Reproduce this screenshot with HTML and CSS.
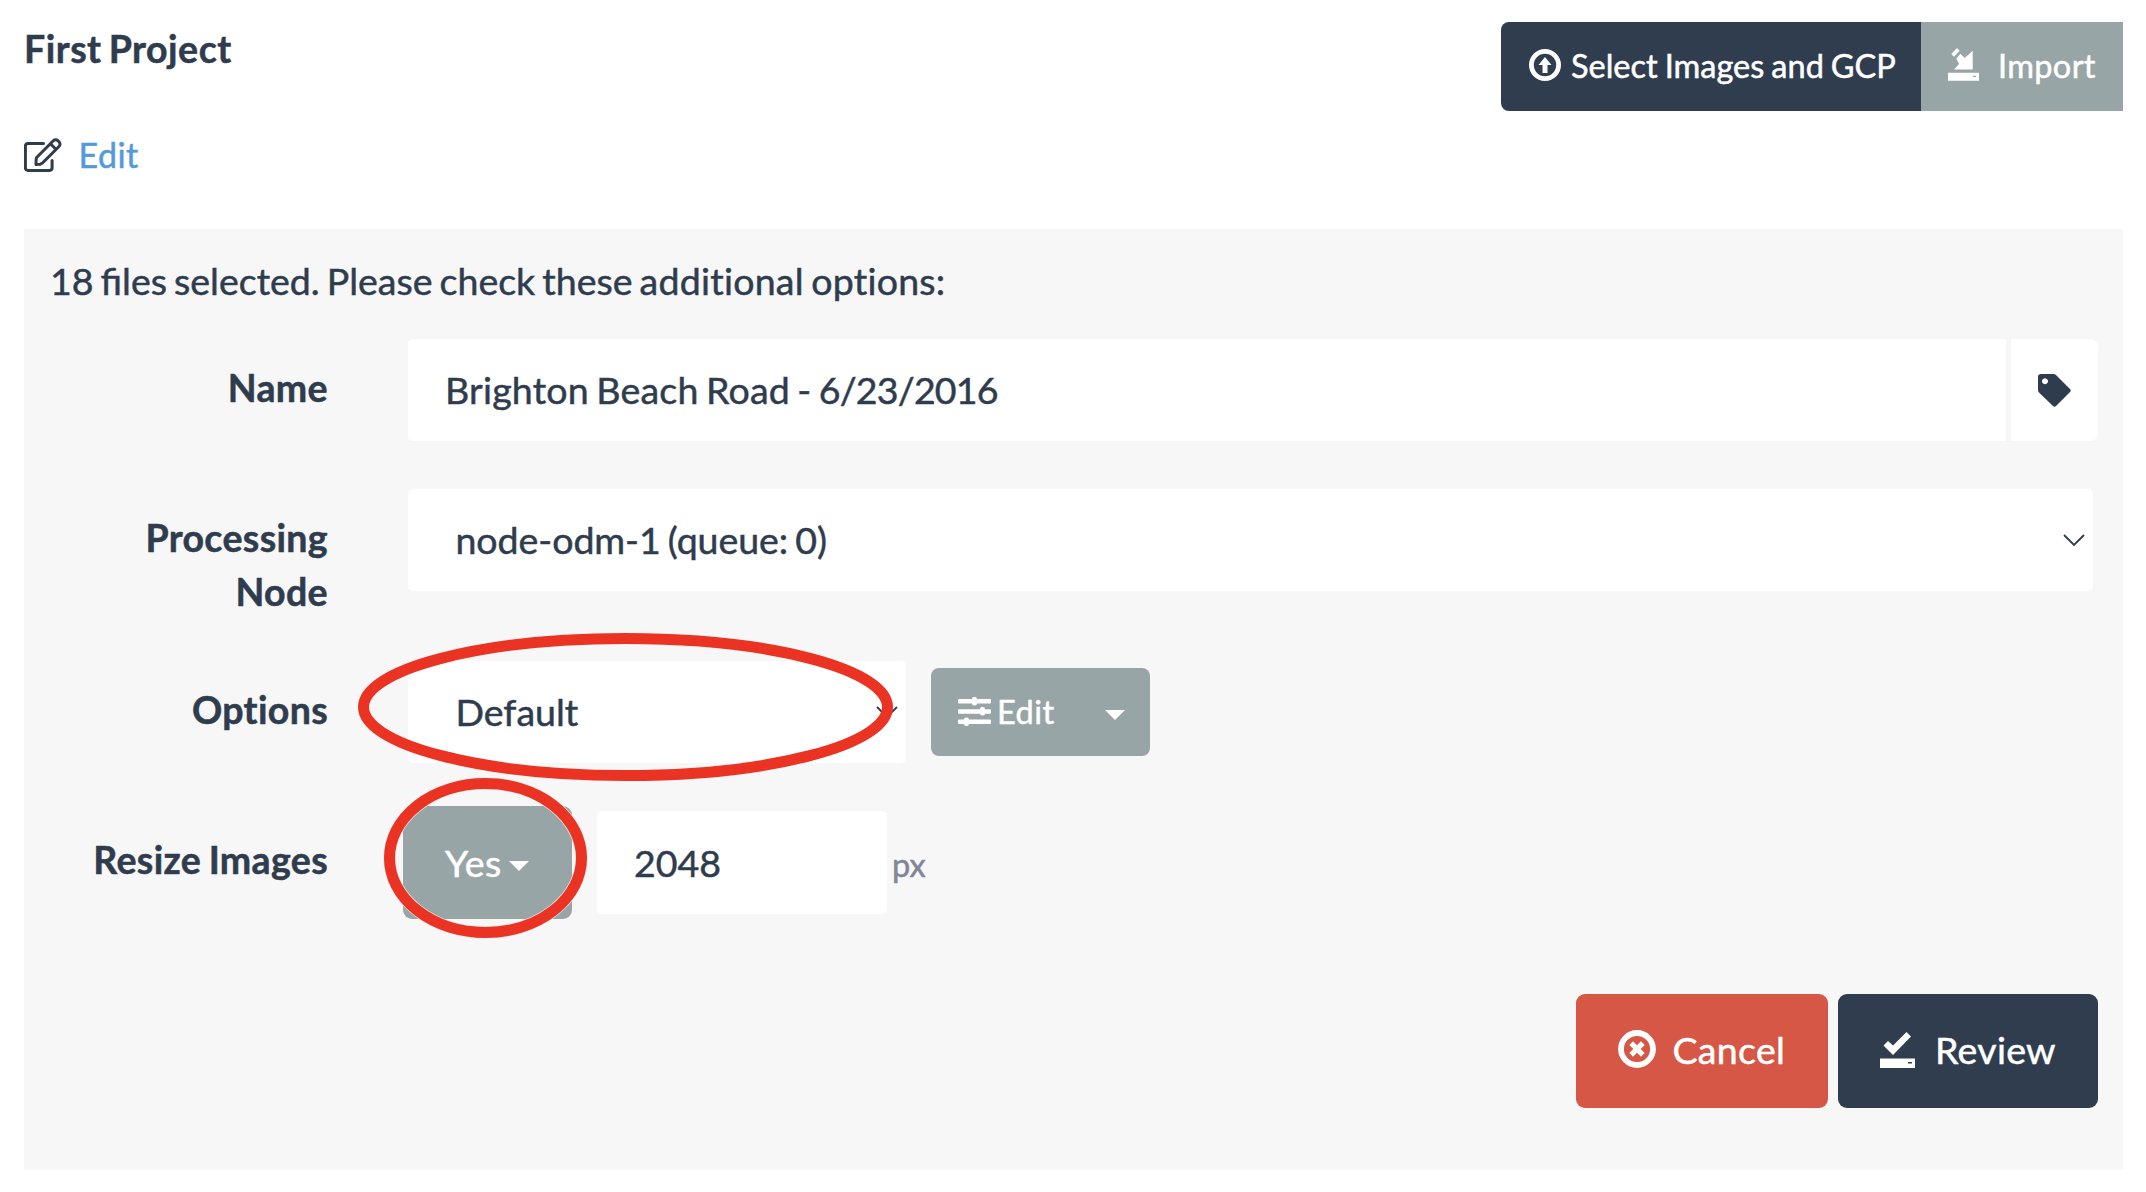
FILE: index.html
```html
<!DOCTYPE html>
<html lang="en">
<head>
<meta charset="utf-8">
<title>First Project</title>
<link rel="stylesheet" href="styles.css">
</head>
<body>
<header class="project-header">
  <div class="project-info">
    <h1 class="project-title">First Project</h1>
    <div class="project-actions">
      <svg class="icon-edit" viewBox="0 0 38 34" fill="none" stroke="currentColor" stroke-width="3" stroke-linejoin="round" stroke-linecap="round"><path d="M19.500 5.400H4a2.600 2.600 0 0 0-2.600 2.600V30a2.600 2.600 0 0 0 2.600 2.400H25.500a2.600 2.600 0 0 0 2.600-2.600V22.500"/><path d="M12.600 19.500 29.300 2.800a3.300 3.300 0 0 1 4.700 0l1 1a3.300 3.300 0 0 1 0 4.700L18.500 25l-2.500 1.300-4 .3.100-4.800zM26.500 5.800l5.400 5.400"/></svg>
      <a class="edit-link">Edit</a>
    </div>
  </div>
  <div class="button-group">
    <button class="btn btn-primary btn-select"><svg class="icon-upload" viewBox="0 0 32 32"><circle cx="16" cy="16" r="13.600" fill="none" stroke="currentColor" stroke-width="4.800"/><path fill="currentColor" d="M16 8l6.500 8h-4v8h-5v-8h-4z"/></svg>Select Images and GCP</button><button class="btn btn-secondary btn-import"><svg class="icon-import" viewBox="0 0 31 33" fill="currentColor"><path d="M3.300 6L9 0l2.700 2.700L6 8.700zM12.300 5.700l4.400 4.300L24.700 2.700v18.800H6l5-5.500-2.700-5.500z"/><path fill-rule="evenodd" d="M0 24.700h31v8H0zm25 3v1.300h3v-1.300z"/></svg>Import</button>
  </div>
</header>
<main class="task-panel">
  <p class="intro">18 files selected. Please check these <span class="intro-end">additional options:</span></p>
  <div class="form-row row-name">
    <label class="label">Name</label>
    <div class="name-group">
      <div class="field field-name">Brighton Beach Road -&nbsp;<span class="date">6/23/2016</span></div>
      <button class="tag-button"><svg class="icon-tag" viewBox="0 0 33 33"><path fill="currentColor" fill-rule="evenodd" d="M3 0H15.500Q17 0 18 1L32 15Q33.500 16.500 32 18L18 32Q16.500 33.500 15 32L1 18.500Q0 17.500 0 16V3Q0 0 3 0zM7 4.300a3 3 0 1 0 .01 0z"/></svg></button>
    </div>
  </div>
  <div class="form-row row-node">
    <label class="label">Processing Node</label>
    <div class="field select select-node">node-odm-1 (queue: 0)<svg class="chevron" viewBox="0 0 22 13"><path d="M1 1l10 10L21 1"/></svg></div>
  </div>
  <div class="form-row row-options">
    <label class="label">Options</label>
    <div class="field select select-options">Default<svg class="chevron" viewBox="0 0 22 13"><path d="M1 1l10 10L21 1"/></svg></div>
    <button class="btn btn-secondary btn-edit"><svg class="icon-sliders" viewBox="0 0 33 29" fill="currentColor"><rect y="2" width="33" height="4.500" rx="1"/><rect x="14" width="5" height="8.500" rx="2"/><rect y="12.200" width="33" height="4.500" rx="1"/><rect x="22" y="10" width="5" height="8.500" rx="2"/><rect y="22.400" width="33" height="4.500" rx="1"/><rect x="6" y="20.400" width="5" height="8.500" rx="2"/></svg>Edit<span class="caret"></span></button>
  </div>
  <div class="form-row row-resize">
    <label class="label">Resize Images</label>
    <button class="btn btn-secondary btn-yes">Yes<span class="caret"></span></button>
    <div class="field field-size">2048</div>
    <span class="unit">px</span>
  </div>
  <div class="form-actions">
    <button class="btn btn-danger btn-large"><svg class="icon-cancel" viewBox="0 0 38 38" fill="none" stroke="currentColor"><circle cx="19" cy="19" r="16" stroke-width="5.800"/><path d="M13.200 13.200l11.600 11.600m0-11.600l-11.600 11.600" stroke-width="5.200"/></svg>Cancel</button>
    <button class="btn btn-primary btn-large btn-review"><svg class="icon-review" viewBox="0 0 35 36" fill="currentColor"><path d="M3.500 13.500L8 9l5 4.500L26.500 0 31 4.500 13 23z"/><path fill-rule="evenodd" d="M0 26.500h35V36H0zm28 3.500v1.600h4V30z"/></svg>Review</button>
  </div>
</main>
<svg class="annotations" viewBox="0 0 2146 1192">
  <ellipse cx="625.500" cy="707" rx="262" ry="68.500"/>
  <ellipse class="halo" cx="485.500" cy="858" rx="96" ry="74.500"/>
  <ellipse cx="485.500" cy="858" rx="96" ry="74.500"/>
</svg>
</body>
</html>
```
FILE: styles.css
```css
* { box-sizing: border-box; }

body {
  margin: 0;
  width: 2146px;
  height: 1192px;
  padding: 22px 23px 0 24px;
  position: relative;
  overflow: hidden;
  background: #fff;
  color: #2f3c4e;
  font-family: Lato, sans-serif;
  font-size: 37.5px;
  line-height: 53.5px;
  -webkit-text-stroke: 0.5px;
}

svg { display: block; flex: none; }

.project-header {
  display: flex;
  justify-content: space-between;
  align-items: flex-start;
  height: 207px;
}

.project-title {
  margin: 0;
  font-size: 37.5px;
  font-weight: 700;
  letter-spacing: 0.5px;
  word-spacing: -2.5px;
}

.project-actions {
  display: flex;
  align-items: center;
  margin-top: 54px;
  font-size: 34px;
  line-height: 50px;
}

.icon-edit { width: 38px; height: 34px; margin-right: 16.5px; }
.edit-link { color: #5499db; letter-spacing: 0.5px; }

.button-group { display: flex; }

.btn {
  display: flex;
  align-items: center;
  border: 0;
  padding: 0 0 2px;
  color: #fff;
  border-radius: 8px;
  font: 32.5px/48px Lato, sans-serif;
  white-space: nowrap;
}

.btn-primary { background: #303d4f; }
.btn-secondary { background: #98a5a6; }
.btn-danger { background: #d65745; }

.btn-select {
  width: 420px;
  height: 89px;
  padding-left: 28px;
  border-radius: 8px 0 0 8px;
  word-spacing: -1.3px;
}

.btn-import {
  width: 202px;
  height: 89px;
  padding-left: 27px;
  border-radius: 0;
  letter-spacing: 0.35px;
}

.icon-upload { width: 32px; height: 32px; margin: -2px 10px 0 0; }
.icon-import { width: 31px; height: 33px; margin: -2px 19px 0 0; }

.task-panel {
  height: 941px;
  padding: 25px;
  background: #f7f7f7;
}

.intro { margin: 0 0 31.500px 1px; word-spacing: -2.5px; }
.intro-end { letter-spacing: 0.25px; }

.form-row { display: flex; align-items: flex-start; }
.row-name, .row-options { height: 150px; }
.row-node { height: 172px; }
.row-resize { height: 183px; }

.label {
  width: 279px;
  margin-right: 80px;
  padding: 22px 0 0 30px;
  font-weight: 700;
  text-align: right;
  letter-spacing: 0.35px;
  word-spacing: -2px;
}

.field {
  display: flex;
  align-items: center;
  height: 102px;
  background: #fff;
  border-radius: 5px;
  word-spacing: -2.5px;
}

.name-group { display: flex; gap: 5px; }
.field-name { width: 1598px; padding-left: 37px; border-radius: 5px 0 0 5px; letter-spacing: 0.22px; }
.date { letter-spacing: -0.8px; }

.tag-button {
  display: flex;
  align-items: center;
  justify-content: center;
  width: 87px;
  border: 0;
  padding: 0;
  background: #fff;
  color: #2f3c4e;
  border-radius: 0 8px 8px 0;
}

.icon-tag { width: 33px; height: 33px; }

.select { justify-content: space-between; padding: 0 8px 0 47.5px; }
.select-node { width: 1685px; letter-spacing: -0.05px; }
.select-options { width: 498px; }

.chevron {
  width: 22px;
  height: 13px;
  fill: none;
  stroke: #2f3c4e;
  stroke-width: 1.800;
}

.caret {
  border: 10px solid transparent;
  border-top-color: #fff;
  border-bottom: 0;
}

.btn-edit { width: 219px; height: 88px; margin: 7px 0 0 25px; padding: 0 0 0 27px; letter-spacing: 0.5px; }
.btn-edit .caret { margin: 6px 0 0 50px; }
.icon-sliders { width: 33px; height: 29px; margin: -1px 6px 0 0; }

.btn-yes {
  width: 169px;
  height: 113px;
  margin: -5px 25px 0 -5px;
  padding: 0 0 0 42px;
  border-radius: 9px;
  font-size: 37.5px;
  letter-spacing: 0.5px;
}

.btn-yes .caret { margin: 7px 0 0 7px; }
.field-size { width: 290px; height: 103px; padding-left: 37px; }
.unit { margin: 28.500px 0 0 5px; color: #7f8796; font-size: 32.5px; line-height: 50px; }

.form-actions { display: flex; justify-content: flex-end; gap: 10px; }
.btn-large { width: 252px; height: 114px; padding-left: 42px; border-radius: 9px; font-size: 37.5px; letter-spacing: 0.3px; }
.btn-review { width: 260px; }
.icon-cancel { width: 38px; height: 38px; margin: -2px 16.5px 0 0; }
.icon-review { width: 35px; height: 36px; margin: 0 20px 0 0; }

.annotations {
  position: absolute;
  left: 0;
  top: 0;
  width: 2146px;
  height: 1192px;
  pointer-events: none;
  fill: none;
  stroke: #ea3323;
  stroke-width: 11;
}

.annotations .halo { stroke: #e8eaea; stroke-width: 12.500; }
```
